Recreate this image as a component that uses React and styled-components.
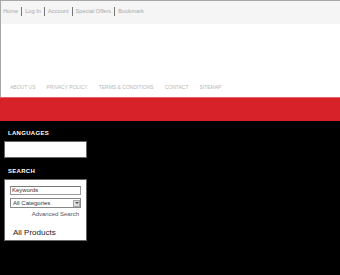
import React from "react";
import styled, { createGlobalStyle } from "styled-components";

const Global = createGlobalStyle`
  html, body { margin: 0; padding: 0; background: #000; }
  body { font-family: "Liberation Sans", Arial, sans-serif; }
`;

const Page = styled.div`
  width: 340px;
  min-height: 275px;
  background: #000;
`;

const Header = styled.div`
  background: #fff;
  border-top: 1px solid #a8a8a8;
  border-left: 1px solid #a8a8a8;
  height: 96px;
  display: flex;
  flex-direction: column;
`;

const TopBar = styled.div`
  background: #f5f5f5;
  height: 23px;
  display: flex;
  align-items: flex-start;
  padding: 6px 0 0 2px;
  box-sizing: border-box;
`;

const TopLink = styled.span`
  font-size: 5.7px;
  line-height: 9px;
  color: #a9a9a9;
`;

const Sep = styled.span`
  width: 1px;
  height: 9px;
  background: #777;
  margin: 0 3px;
`;

const Nav = styled.div`
  margin-top: auto;
  margin-bottom: 6px;
  display: flex;
  gap: 11px;
  padding-left: 9px;
`;

const NavLink = styled.span`
  font-size: 5px;
  line-height: 7px;
  color: #b8b8b8;
  text-transform: uppercase;
`;

const RedBand = styled.div`
  height: 23px;
  background: #d8222a;
  border-top: 1px solid #e8646a;
`;

const Main = styled.div`
  display: flex;
`;

const Sidebar = styled.div`
  width: 83px;
  padding: 8px 0 0 4px;
  display: flex;
  flex-direction: column;
`;

const BoxTitle = styled.div`
  color: #fff;
  font-size: 6px;
  font-weight: bold;
  letter-spacing: 0.3px;
  line-height: 8px;
  padding-left: 4px;
  margin-bottom: 4px;
`;

const Box = styled.div`
  background: #fff;
  border: 1px solid #666;
  height: ${(p) => p.h}px;
  box-sizing: border-box;
  margin-bottom: ${(p) => p.mb || 0}px;
  padding: ${(p) => (p.pad ? "6px 5px 0 5px" : "0")};
  display: flex;
  flex-direction: column;
`;

const Input = styled.div`
  height: 9px;
  box-sizing: border-box;
  border: 1px solid #999;
  border-top-color: #777;
  font-size: 6px;
  line-height: 7px;
  color: #333;
  padding-left: 1px;
  margin-bottom: 3px;
`;

const Select = styled.div`
  height: 10px;
  box-sizing: border-box;
  border: 1px solid #888;
  font-size: 6px;
  line-height: 8px;
  color: #333;
  padding-left: 2px;
  display: flex;
  justify-content: space-between;
  align-items: center;
`;

const Arrow = styled.span`
  width: 7px;
  height: 7px;
  background: #ddd;
  border: 1px solid #aaa;
  box-sizing: border-box;
  display: flex;
  align-items: center;
  justify-content: center;
  &::after {
    content: "";
    border-left: 2px solid transparent;
    border-right: 2px solid transparent;
    border-top: 2px solid #555;
  }
`;

const Advanced = styled.div`
  font-size: 6px;
  color: #555;
  text-align: right;
  padding-right: 2px;
  margin-top: 2px;
  line-height: 8px;
`;

const AllProducts = styled.div`
  font-size: 8px;
  color: #222;
  padding-left: 3px;
  margin-top: 10px;
  line-height: 10px;
`;

export default function App() {
  const top = ["Home", "Log In", "Account", "Special Offers", "Bookmark"];
  const nav = ["About us", "Privacy policy", "Terms & conditions", "Contact", "Sitemap"];
  return (
    <Page>
      <Global />
      <Header>
        <TopBar>
          {top.map((t, i) => (
            <React.Fragment key={t}>
              {i > 0 && <Sep />}
              <TopLink>{t}</TopLink>
            </React.Fragment>
          ))}
        </TopBar>
        <Nav>
          {nav.map((n) => (
            <NavLink key={n}>{n}</NavLink>
          ))}
        </Nav>
      </Header>
      <RedBand />
      <Main>
        <Sidebar>
          <BoxTitle>LANGUAGES</BoxTitle>
          <Box h={17} mb={9} />
          <BoxTitle>SEARCH</BoxTitle>
          <Box h={62} pad>
            <Input>Keywords</Input>
            <Select>
              All Categories
              <Arrow />
            </Select>
            <Advanced>Advanced Search</Advanced>
            <AllProducts>All Products</AllProducts>
          </Box>
        </Sidebar>
      </Main>
    </Page>
  );
}
